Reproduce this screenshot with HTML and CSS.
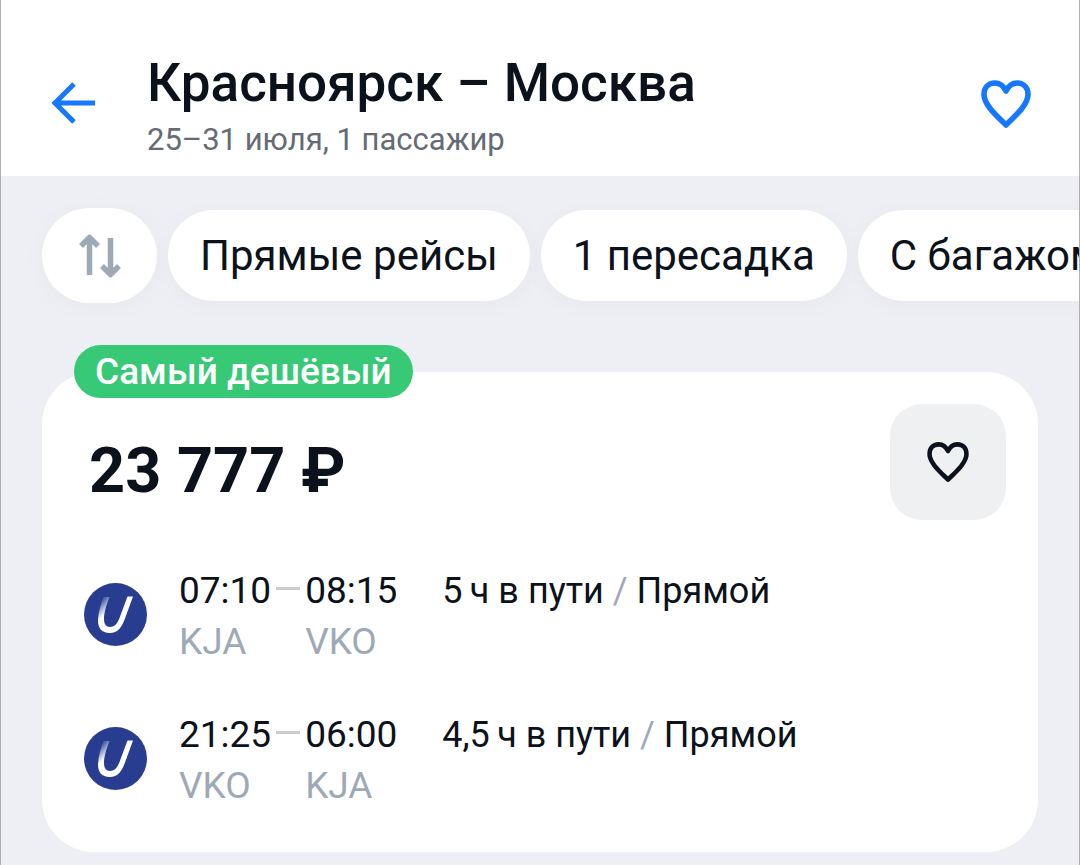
FILE: index.html
```html
<!DOCTYPE html>
<html lang="ru">

<head>
    <meta charset="UTF-8">
    <meta name="viewport" content="width=device-width, initial-scale=1.0">
    <title>Красноярск – Москва</title>
    <link rel="stylesheet" href="styles.css">
</head>

<body>

    <header class="header">
        <a class="back" href="#" aria-label="Назад">
            <svg width="44" height="44" viewBox="0 0 44 44" fill="none" stroke="#1677ff" stroke-width="5">
                <path d="M44 21H4M23 2L4 21l19 19" />
            </svg>
        </a>
        <div class="route">
            <h1>Красноярск – Москва</h1>
            <p>25–31 июля, 1 пассажир</p>
        </div>
        <button class="favorite" type="button" aria-label="В избранное">
            <svg width="52" height="50" viewBox="0 0 52 50" fill="none" stroke="#1677ff" stroke-width="5.6" stroke-linejoin="round">
                <path d="M26 12C23 6 19 4 15 4C8 4 4 9 4 15.500C4 26 17 37 26 46C35 37 48 26 48 15.500C48 9 44 4 37 4C33 4 29 6 26 12Z" />
            </svg>
        </button>
    </header>

    <main>
        <div class="filters">
            <button class="sort" type="button" aria-label="Сортировка">
                <svg width="42" height="44" viewBox="0 0 42 44" fill="none" stroke="#9ea9b7" stroke-width="5.5" stroke-linejoin="round">
                    <path d="M10.500 41V4M2 12l8.500-8.500L19 12M31.500 4v37M23 32l8.500 8.500L40 32" />
                </svg>
            </button>
            <button class="chip" type="button">Прямые рейсы</button>
            <button class="chip" type="button">1 пересадка</button>
            <button class="chip" type="button">С багажом</button>
        </div>

        <article class="ticket">
            <span class="badge">Самый дешёвый</span>

            <div class="ticket-top">
                <h2 class="price">23 777 ₽</h2>
                <button class="like" type="button" aria-label="В избранное">
                    <svg width="44" height="42" viewBox="0 0 52 50" fill="none" stroke="#0b121c" stroke-width="5.4" stroke-linejoin="round">
                        <path d="M26 12C23 6 19 4 15 4C8 4 4 9 4 15.500C4 26 17 37 26 46C35 37 48 26 48 15.500C48 9 44 4 37 4C33 4 29 6 26 12Z" />
                    </svg>
                </button>
            </div>

            <div class="legs">
                <!-- Туда -->
                <div class="leg">
                    <svg class="logo" viewBox="0 0 63 63">
                        <defs>
                            <linearGradient id="fade" gradientUnits="userSpaceOnUse" x1="17" y1="17" x2="26" y2="26">
                                <stop offset="0" stop-color="#fff" stop-opacity="0.1" />
                                <stop offset="1" stop-color="#fff" />
                            </linearGradient>
                        </defs>
                        <circle cx="31.500" cy="31.500" r="31.500" fill="#283d8f" />
                        <path d="M19.500 14H25.500C22 23 20 30 20 36C20 41 22 44 26 44C31 44 33.500 40 35.500 35L43.500 13.500H49L41 35.500C38 44 34 50 25.500 50C18 50 14 45 14 38C14 31 16.500 22 19.500 14Z" fill="url(#fade)" />
                    </svg>
                    <div class="point">
                        <time>07:10</time>
                        <span>KJA</span>
                    </div>
                    <i class="dash"></i>
                    <div class="point">
                        <time>08:15</time>
                        <span>VKO</span>
                    </div>
                    <p class="info">5&thinsp;ч в пути <span>/</span> Прямой</p>
                </div>

                <!-- Обратно -->
                <div class="leg">
                    <svg class="logo" viewBox="0 0 63 63">
                        <circle cx="31.500" cy="31.500" r="31.500" fill="#283d8f" />
                        <path d="M19.500 14H25.500C22 23 20 30 20 36C20 41 22 44 26 44C31 44 33.500 40 35.500 35L43.500 13.500H49L41 35.500C38 44 34 50 25.500 50C18 50 14 45 14 38C14 31 16.500 22 19.500 14Z" fill="url(#fade)" />
                    </svg>
                    <div class="point">
                        <time>21:25</time>
                        <span>VKO</span>
                    </div>
                    <i class="dash"></i>
                    <div class="point">
                        <time>06:00</time>
                        <span>KJA</span>
                    </div>
                    <p class="info">4,5&thinsp;ч в пути <span>/</span> Прямой</p>
                </div>
            </div>
        </article>
    </main>

</body>

</html>
```
FILE: styles.css
```css
* {
    box-sizing: border-box;
    margin: 0;
    padding: 0;
}

body {
    min-height: 100vh;
    border-left: 1px solid #b0b0b4;
    border-right: 1px solid #b0b0b4;
    background-color: #eeeff4;
    color: #0b121c;
    font-family: Roboto, sans-serif;
    overflow-x: hidden;
}

button {
    border: none;
    background: none;
    color: inherit;
    font-family: inherit;
    cursor: pointer;
}

svg {
    display: block;
}

.header {
    display: flex;
    align-items: center;
    padding: 51px 47px 16px 50px;
    background-color: white;
}

.back,
.favorite {
    margin-bottom: 4px;
}

.route {
    flex: 1;
    margin-left: 52px;
}

.route h1 {
    font-size: 53px;
    font-weight: 500;
    line-height: 64px;
}

.route p {
    margin-top: 5px;
    font-size: 31px;
    line-height: 40px;
    color: #646b76;
}

.filters {
    display: flex;
    align-items: center;
    gap: 11px;
    padding: 32px 0 42px 41px;
    overflow: hidden;
}

.sort,
.chip {
    flex-shrink: 0;
    border-radius: 48px;
    background-color: white;
    box-shadow: 0 4px 24px rgba(30, 40, 60, 0.03);
}

.sort {
    display: flex;
    align-items: center;
    justify-content: center;
    width: 115px;
    height: 95px;
}

.chip {
    height: 91px;
    padding: 0 32px;
    font-size: 42px;
    white-space: nowrap;
}

.ticket {
    position: relative;
    margin: 27px 41px 13px;
    padding: 32px 32px 41px 42px;
    border-radius: 52px;
    background-color: white;
}

.badge {
    position: absolute;
    top: -27px;
    left: 32px;
    padding: 0 21px;
    border-radius: 27px;
    background-color: #38c976;
    color: white;
    font-size: 37px;
    font-weight: 500;
    line-height: 53px;
}

.ticket-top {
    display: flex;
    align-items: center;
    justify-content: space-between;
}

.price {
    padding: 18px 0 0 5px;
    font-size: 63px;
    font-weight: 700;
    line-height: 72px;
}

.like {
    display: flex;
    align-items: center;
    justify-content: center;
    width: 116px;
    height: 116px;
    border-radius: 32px;
    background-color: #eff0f2;
}

.legs {
    display: grid;
    gap: 42px;
    margin-top: 45px;
}

.leg {
    display: flex;
    align-items: flex-start;
    font-size: 37px;
    line-height: 51px;
}

.logo {
    width: 63px;
    height: 63px;
    margin: 18px 32px 0 0;
}

.point time,
.point span {
    display: block;
}

.point span {
    color: #9ea9b7;
}

.dash {
    width: 24px;
    height: 3px;
    margin: 22px 5px 0;
    background-color: #cccccc;
}

.info {
    margin-left: 45px;
    font-size: 36px;
    line-height: 53px;
}

.info span {
    color: #9ea9b7;
}
```
